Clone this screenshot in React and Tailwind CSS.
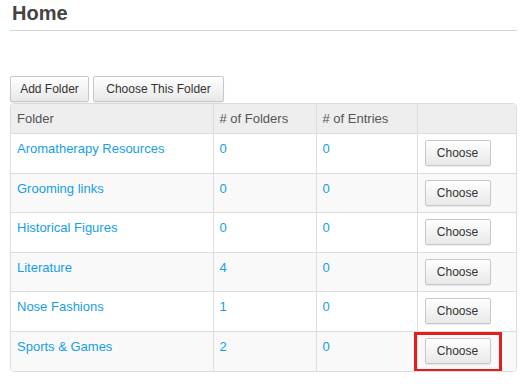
const folders = [
  { name: "Aromatherapy Resources", folders: 0, entries: 0 },
  { name: "Grooming links", folders: 0, entries: 0 },
  { name: "Historical Figures", folders: 0, entries: 0 },
  { name: "Literature", folders: 4, entries: 0 },
  { name: "Nose Fashions", folders: 1, entries: 0 },
  { name: "Sports & Games", folders: 2, entries: 0 },
];

const btn =
  "h-[26px] px-0 whitespace-nowrap border border-[#c8c8c8] rounded-[2px] bg-gradient-to-b from-white to-[#e8e8e8] text-[12px] text-[#333] leading-none shadow-[0_1px_1px_rgba(0,0,0,0.08)]";

const App = () => {
  return (
    <div className="w-[522px] h-[384px] bg-white px-[10px] font-['Liberation_Sans',Arial,sans-serif] text-[13px] text-[#555]">
      <h2 className="pt-[2px] pl-[2px] text-[20px] font-bold leading-[22px] text-[#444]">
        Home
      </h2>
      <div className="mt-[6px] h-px w-[507px] bg-[#d4d4d4]" />

      <div className="mt-[45px] flex gap-[4px]">
        <button className={`${btn} h-[25px] w-[79px]`}>Add Folder</button>
        <button className={`${btn} h-[25px] w-[131px]`}>Choose This Folder</button>
      </div>

      <div className="mt-px w-[507px] overflow-hidden rounded-[4px] border border-[#dddddd]">
        <table className="w-full border-collapse leading-[18px]">
          <thead>
            <tr className="bg-[#eeeeee]">
              <th className="w-[202px] px-[6px] pt-[6px] pb-[5px] text-left font-normal text-[#555]">
                Folder
              </th>
              <th className="w-[103px] border-l border-[#dddddd] px-[6px] pt-[6px] pb-[5px] text-left font-normal text-[#555]">
                # of Folders
              </th>
              <th className="w-[101px] border-l border-[#dddddd] px-[6px] pt-[6px] pb-[5px] text-left font-normal text-[#555]">
                # of Entries
              </th>
              <th className="border-l border-[#dddddd] px-[6px] pt-[6px] pb-[5px]" />
            </tr>
          </thead>
          <tbody>
            {folders.map((f, i) => (
              <tr
                key={f.name}
                className={`border-t border-[#dddddd] ${i % 2 === 1 ? "bg-[#f9f9f9]" : "bg-white"}`}
              >
                <td className="px-[6px] pt-[6px] align-top">
                  <a className="text-[#159ee6]">{f.name}</a>
                </td>
                <td className="border-l border-[#dddddd] px-[6px] pt-[6px] align-top">
                  <a className="text-[#159ee6]">{f.folders}</a>
                </td>
                <td className="border-l border-[#dddddd] px-[6px] pt-[6px] align-top">
                  <a className="text-[#159ee6]">{f.entries}</a>
                </td>
                <td className="relative border-l border-[#dddddd] pl-[7px] pt-[6px] pb-[6.6px] align-top">
                  <button className={`${btn} w-[66px]`}>Choose</button>
                  {i === folders.length - 1 && (
                    <div className="absolute left-[-4px] top-[0px] h-[40px] w-[88px] border-[3px] border-[#e0201f]" />
                  )}
                </td>
              </tr>
            ))}
          </tbody>
        </table>
      </div>
    </div>
  );
};

export default App;
